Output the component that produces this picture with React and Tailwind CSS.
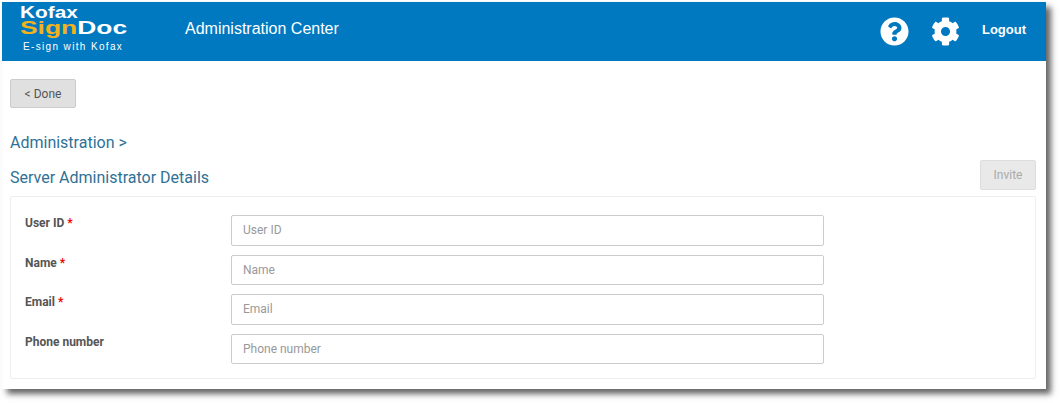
import React from 'react';
import { FaQuestionCircle, FaCog } from 'react-icons/fa';

const fields = [
  { label: 'User ID', required: true },
  { label: 'Name', required: true },
  { label: 'Email', required: true },
  { label: 'Phone number', required: false },
];

const Logo = () => (
  <div className="w-[118px] pl-[18px] font-['Liberation_Sans',sans-serif] text-white">
    <div className="mt-[4px] h-[13px] origin-left scale-x-[1.3] text-[16px] leading-[13px] font-bold">Kofax</div>
    <div className="h-[17px] origin-left scale-x-[1.39] text-[19px] leading-[18px] font-bold whitespace-nowrap">
      <span className="text-[#f2b21c]">Sign</span>Doc
    </div>
    <div className="mt-[5px] pl-[3px] text-[10px] leading-[11px] tracking-[1.35px] whitespace-nowrap">E-sign with Kofax</div>
  </div>
);

const App = () => {
  return (
    <div className="h-[403px] w-[1060px] overflow-hidden bg-white pt-[2px] pl-[2px] font-['Liberation_Sans',sans-serif]">
      <div className="h-[387px] w-[1044px] bg-white shadow-[5px_5px_6px_#666]">

        {/* Top bar */}
        <div className="flex h-[59px] items-start bg-[#0079c1] text-white">
          <Logo />
          <div className="mt-[17px] ml-[65px] text-[16px] leading-[20px]">Administration Center</div>
          <div className="ml-auto flex items-center pt-[15px] pr-[20px]">
            <FaQuestionCircle className="h-[29px] w-[29px]" />
            <FaCog className="ml-[22px] h-[29px] w-[29px]" />
            <span className="ml-[22px] -translate-y-[2px] text-[13px] font-bold">Logout</span>
          </div>
        </div>

        <div className="px-[8px]">
          <button className="mt-[18px] h-[29px] w-[66px] rounded-[2px] border border-[#ccc] bg-[#e0e0e0] font-['Roboto',sans-serif] text-[12px] text-[#555]">
            &lt; Done
          </button>

          <div className="mt-[25px] font-['Roboto',sans-serif] text-[16px] leading-[20px] text-[#2f7196]">Administration &gt;</div>

          <div className="mt-[7px] flex h-[36px] items-start justify-between pr-[2px]">
            <div className="mt-[8px] font-['Roboto',sans-serif] text-[16px] leading-[20px] text-[#2f7196]">Server Administrator Details</div>
            <button className="h-[30px] w-[56px] rounded-[2px] border border-[#ddd] bg-[#e9e9e9] font-['Roboto',sans-serif] text-[12px] text-[#aaa]">
              Invite
            </button>
          </div>

          {/* Form panel */}
          <div className="mr-[2px] h-[183px] rounded-[2px] border border-[#eee] pt-[18px] pl-[14px]">
            {fields.map((f) => (
              <div key={f.label} className="flex h-[39.6px] items-start">
                <label className="w-[206px] pt-[1px] font-['Roboto',sans-serif] text-[12px] leading-[14px] font-bold text-[#555]">
                  {f.label}
                  {f.required && <span className="ml-[3px] text-[#e00]">*</span>}
                </label>
                <input
                  placeholder={f.label}
                  className="h-[30.6px] w-[593px] rounded-[2px] border border-[#ccc] bg-white px-[11px] font-['Roboto',sans-serif] text-[12px] placeholder:text-[#999]"
                />
              </div>
            ))}
          </div>
        </div>
      </div>
    </div>
  );
};

export default App;
